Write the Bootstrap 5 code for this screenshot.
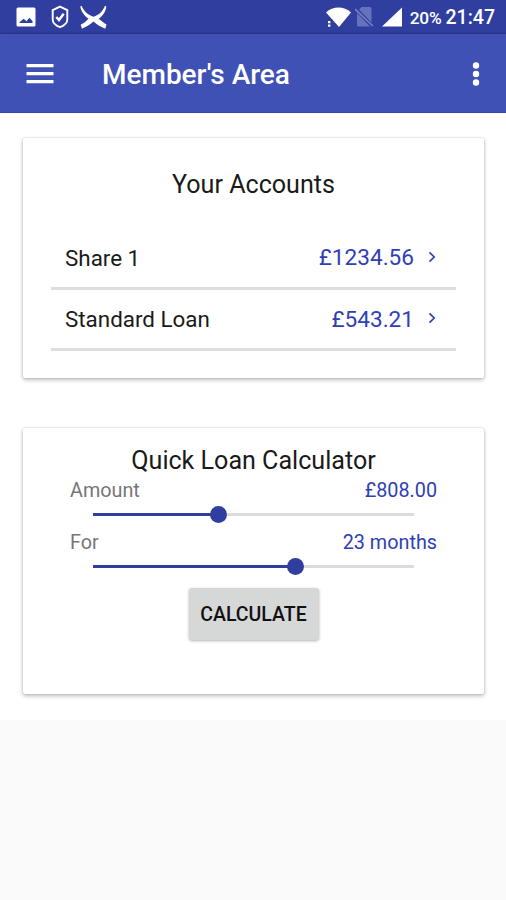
<!DOCTYPE html>
<html lang="en">
<head>
<meta charset="utf-8">
<meta name="viewport" content="width=device-width, initial-scale=1">
<title>Member's Area</title>
<link rel="stylesheet" href="https://cdn.jsdelivr.net/npm/bootstrap@5.3.0/dist/css/bootstrap.min.css">
<style>
body{font-family:Roboto,"Liberation Sans",sans-serif;background:#fafafa;color:#1a1a1a;min-height:900px;overflow:hidden}
svg{display:block;flex:none}
.status-bar{height:34px;background:#303f9f;box-shadow:inset 0 -2px 2px -1px #28358a;padding:0 11px 0 16px;color:#fff;font-weight:500}
.status-bar .pct{font-size:17.300px;letter-spacing:-.2px;line-height:34px;padding-top:2px}
.status-bar .clock{font-size:19.500px;line-height:34px;padding-top:2px}
.shield{margin-left:15px}
.radio{margin-left:4px}
.signal{margin-left:8px}
.app-bar{height:79px;background:#3f51b5;box-shadow:0 1px 3px rgba(0,0,0,.35);padding:0 26px;color:#fff;border-bottom:1px solid #3445ad}
.app-title{font-size:28px;font-weight:500;line-height:32px;margin-left:48px;padding-top:3px}
.menu-icon{margin-top:1px}
main{background:#fff;height:607px;padding:25px 22px 0 23px}
.panel{border:0;border-radius:2px;background:#fff;box-shadow:0 2px 4px rgba(0,0,0,.26),0 0 2px rgba(0,0,0,.2)}
.accounts{height:240px;padding:31px 28px 0}
.calc{height:266px;margin-top:50px;padding:17px 47px 0}
.panel-title{font-size:25.100px;line-height:32px;font-weight:400}
.account-row{height:61.500px;border-bottom:3px solid #dedede;padding:1px 20px 0 14px;line-height:28px}
.account-name{font-size:22.400px}
.account-sum{font-size:22.600px;padding-top:1px}
.chev{margin:-2px 0 0 14px}
.accounts .list{margin-top:27px}
.tint{color:#3040b4}
.muted{color:#767676}
.field{font-size:19.800px;line-height:26px;position:relative;top:1px}
.slider{height:26px;margin:-2px 23px 2px}
.rail{height:3px;background:#dcdcdc}
.fill{height:3px;background:#303f9f}
.knob{width:17px;height:17px;border-radius:50%;background:#303f9f;margin:0 -8.5px;flex:none;z-index:1}
.btn-calc{width:130px;height:52px;background:#d6d7d7;color:#111;border:0;border-radius:3px;font-size:19.500px;font-weight:500;padding:1px 0 0;box-shadow:0 1px 3px rgba(0,0,0,.3);margin-top:7px}
</style>
</head>
<body>
<header>
  <div class="status-bar d-flex align-items-center">
    <svg width="20" height="20" viewBox="0 0 20 20"><path fill="#fff" fill-rule="evenodd" d="M2 .5h16a1.500 1.500 0 0 1 1.500 1.500v16a1.500 1.500 0 0 1-1.500 1.500H2A1.500 1.500 0 0 1 .5 18V2A1.500 1.500 0 0 1 2 .5zM3.500 16h13v-2l-3.200-3.200-2.700 3.400-3-2.400-4.100 3.400z"/></svg>
    <svg class="shield" width="18" height="24" viewBox="0 0 18 24" fill="none" stroke="#fff" stroke-width="1.900"><path d="M9 1.600l7.300 3.600v9.300c0 3.600-3.600 6.300-7.300 7.700-3.700-1.400-7.300-4.100-7.300-7.700V5.200z"/><path d="M5.300 12l2.700 3 4.700-6.300" stroke-width="2.500"/></svg>
    <svg class="ms-2" width="34" height="26" viewBox="0 0 34 26"><path fill="#fff" d="M4.500 1.800C7 7.500 11 11 16.500 12.800 22 11 25.800 7.500 28 1.800l1.300.7c-.4 5-3.300 9-7.600 12.200 2.500 2.200 5 4.200 7.800 5.700l-1.200 4.300c-4.300-1.700-8.300-4-11.800-7.200-3.600 3.200-7.600 5.500-11.600 7.200l-1.200-3.900c3-1.600 5.400-3.600 7.800-6.100C7.200 11.500 4 7.500 3.300 2.500z"/></svg>
    <div class="ms-auto d-flex align-items-center">
      <svg width="25" height="20" viewBox="0 0 25 20" fill="#fff"><path d="M0 5.500C7-1.200 18-1.200 25 5.500L13 20z"/><path stroke="#303f9f" d="M.5 12.500h5.500v8H.5z" fill="#303f9f"/><path d="M2 14h2.400v2.300H2zM2 17.500h2.400v2.300H2z"/></svg>
      <svg class="radio" width="19" height="20" viewBox="0 0 19 20"><path fill="#6672ba" d="M6.500 0H15a1.500 1.500 0 0 1 1.500 1.500V15.500L4 2.700zM2 6L15 19.500H3.500A1.500 1.500 0 0 1 2 18z"/><path d="M0 2l17.800 17" stroke="#7581c2" stroke-width="1.700"/></svg>
      <svg class="signal" width="20" height="20" viewBox="0 0 21 20"><path fill="#fff" d="M21 0v20H0z"/></svg>
      <span class="pct ms-2">20%</span>
      <span class="clock ms-1">21:47</span>
    </div>
  </div>
  <nav class="app-bar d-flex align-items-center">
    <svg class="menu-icon" width="28" height="20" viewBox="0 0 28 20" fill="#fff"><path d="M.5 0h27v3.200H.5zM.5 8h27v3.200H.5zM.5 16h27v3.200H.5z"/></svg>
    <h1 class="app-title mb-0">Member's Area</h1>
    <svg class="ms-auto menu-icon" width="8" height="24" viewBox="0 0 8 24" fill="#fff"><circle cx="4" cy="3.500" r="3.200"/><circle cx="4" cy="12" r="3.200"/><circle cx="4" cy="20.500" r="3.200"/></svg>
  </nav>
</header>
<main>
  <section class="card panel accounts">
    <h2 class="panel-title text-center mb-0">Your Accounts</h2>
    <div class="list">
      <div class="account-row d-flex align-items-center">
        <span class="account-name">Share 1</span><span class="account-sum tint ms-auto">£1234.56</span>
        <svg class="chev" width="8" height="12" viewBox="0 0 8 12" fill="none" stroke="#3040b4" stroke-width="1.700"><path d="M1.500 1.300l4.700 4.700-4.700 4.700"/></svg>
      </div>
      <div class="account-row d-flex align-items-center">
        <span class="account-name">Standard Loan</span><span class="account-sum tint ms-auto">£543.21</span>
        <svg class="chev" width="8" height="12" viewBox="0 0 8 12" fill="none" stroke="#3040b4" stroke-width="1.700"><path d="M1.500 1.300l4.700 4.700-4.700 4.700"/></svg>
      </div>
    </div>
  </section>
  <section class="card panel calc">
    <h2 class="panel-title text-center mb-0">Quick Loan Calculator</h2>
    <div class="field d-flex justify-content-between"><span class="muted">Amount</span><span class="tint">£808.00</span></div>
    <div class="slider d-flex align-items-center"><div class="fill" style="width:39%"></div><div class="knob"></div><div class="rail flex-grow-1"></div></div>
    <div class="field d-flex justify-content-between"><span class="muted">For</span><span class="tint">23 months</span></div>
    <div class="slider d-flex align-items-center"><div class="fill" style="width:63%"></div><div class="knob"></div><div class="rail flex-grow-1"></div></div>
    <button type="button" class="btn btn-calc mx-auto">CALCULATE</button>
  </section>
</main>
<script src="https://cdn.jsdelivr.net/npm/bootstrap@5.3.0/dist/js/bootstrap.bundle.min.js"></script>
</body>
</html>
